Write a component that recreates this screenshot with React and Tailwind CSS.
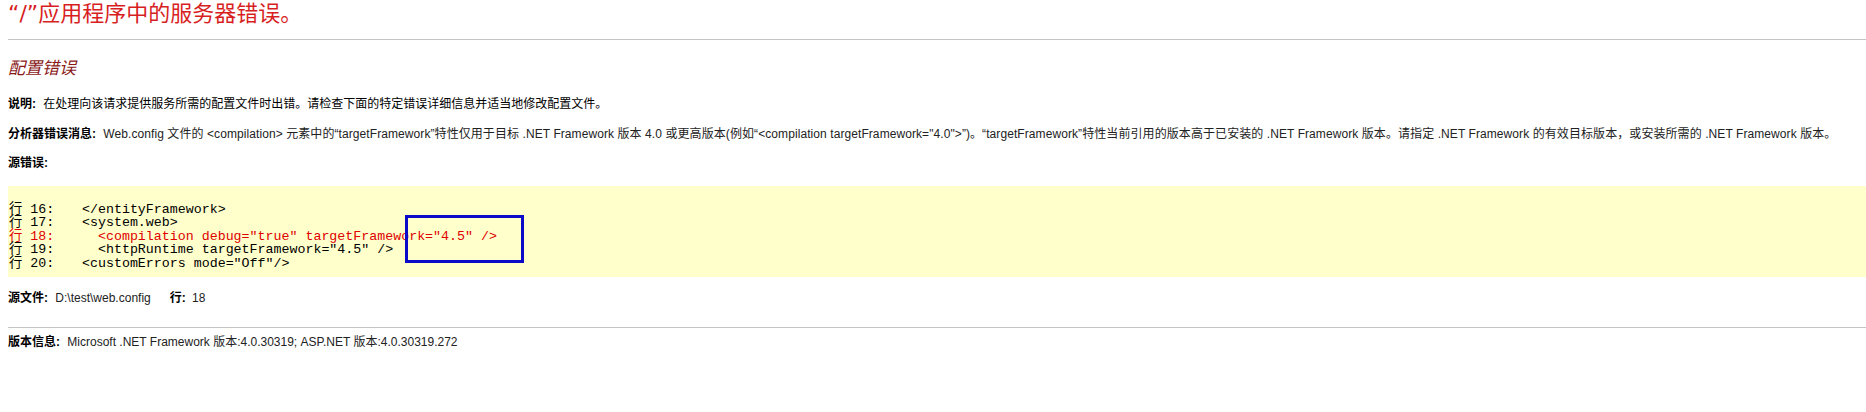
import React from 'react';

const codeLines = [
    { n: 16, code: '</entityFramework>' },
    { n: 17, code: '<system.web>' },
    { n: 18, code: '  <compilation debug="true" targetFramework="4.5" />', hot: true },
    { n: 19, code: '  <httpRuntime targetFramework="4.5" />' },
    { n: 20, code: '<customErrors mode="Off"/>' },
];

export default function App() {
    return (
        <div className="min-h-screen bg-white pl-2 text-[12px] text-black font-['Liberation_Sans','Noto_Sans_CJK_SC',sans-serif]">
            {/* Title */}
            <h1 className="h-[28px] text-[22px] leading-[28px] font-normal text-[#d81f1f]">
                <span className="font-['DejaVu_Sans','Noto_Sans_CJK_SC',sans-serif]">“/”</span>应用程序中的服务器错误。
            </h1>
            <hr className="mt-[11px] border-0 border-t border-[#c4c4c4]" />

            <h2 className="mt-[17px] h-[24px] text-[17px] leading-[24px] font-normal italic text-[#8a1a1a]">配置错误</h2>

            <p className="mt-[15px] h-4 leading-4">
                <b className="mr-[4px]">说明:</b> 在处理向该请求提供服务所需的配置文件时出错。请检查下面的特定错误详细信息并适当地修改配置文件。
            </p>
            <p className="mt-[13.5px] h-4 leading-4 whitespace-nowrap">
                <b className="mr-[4px]">分析器错误消息:</b>{' '}
                <span className="text-[#222] tracking-[0.08px]">
                    Web.config 文件的 &lt;compilation&gt; 元素中的“targetFramework”特性仅用于目标 .NET Framework 版本 4.0 或更高版本(例如“&lt;compilation targetFramework="4.0"&gt;”)。“targetFramework”特性当前引用的版本高于已安装的 .NET Framework 版本。请指定 .NET Framework 的有效目标版本，或安装所需的 .NET Framework 版本。
                </span>
            </p>
            <p className="mt-[13.5px] h-4 leading-4">
                <b>源错误:</b>
            </p>

            {/* Source code block */}
            <div className="relative mt-[15px] h-[91px] bg-[#ffffcc] pl-px pt-[17px] text-[13.3px] font-['Liberation_Mono','Noto_Sans_CJK_SC',monospace]">
                {codeLines.map((l) => (
                    <div key={l.n} className={`flex h-[13.4px] leading-[13.4px] whitespace-pre ${l.hot ? 'text-[#e00000]' : 'text-black'}`}>
                        <span className="w-[73px] shrink-0">行 {l.n}:</span>
                        <span>{l.code}</span>
                    </div>
                ))}
                <div className="absolute left-[397px] top-[29px] h-[48px] w-[119px] border-[3px] border-[#0a0ac8]" />
            </div>

            <p className="mt-[13px] h-4 leading-4">
                <b className="mr-[4px]">源文件:</b> <span className="text-[#222]">D:\test\web.config</span>
                <b className="ml-[19px] mr-[3px]">行:</b> <span className="text-[#222]">18</span>
            </p>
            <hr className="mt-[21px] border-0 border-t border-[#c4c4c4]" />
            <p className="mt-[6px] h-4 leading-4">
                <b className="mr-[4px]">版本信息:</b> <span className="text-[#222]">Microsoft .NET Framework 版本:4.0.30319; ASP.NET 版本:4.0.30319.272</span>
            </p>
        </div>
    );
}
